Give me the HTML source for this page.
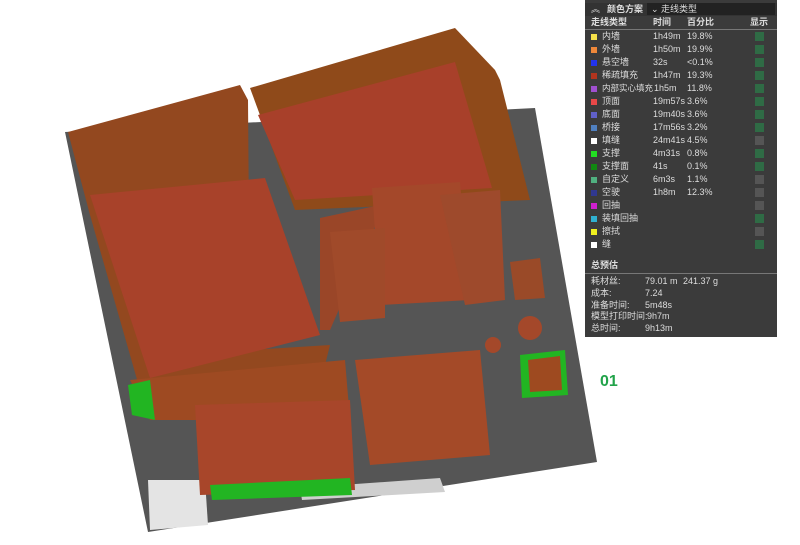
<!DOCTYPE html><html><head><meta charset="utf-8"><style>
body{margin:0;width:800px;height:545px;background:#fff;overflow:hidden;position:relative;font-family:"Liberation Sans","Noto Sans CJK SC",sans-serif}
#p{position:absolute;left:585px;top:0;width:192px;height:337px;background:#3b3b3b;color:#ddd;font-size:9px}
.r{position:absolute;left:0;width:192px;height:13px;line-height:13px}
.r span{position:absolute;white-space:nowrap}
.sw{width:6px;height:6px;top:4px;left:6px}
.ck{position:absolute;left:170px;top:2px;width:9px;height:9px;background:#2f6b45}
.ck.o{background:#555}
</style></head><body>
<svg width="800" height="545" style="position:absolute;left:0;top:0">
<polygon points="65,132 535,108 597,462 148,532" fill="#555"/>
<polygon points="148,480 205,480 208,525 150,530" fill="#e4e4e4"/>
<polygon points="300,488 440,478 445,492 302,500" fill="#cfcfcf"/>
<polygon points="68,132 240,85 248,100 250,350 330,345 325,365 140,390 90,215" fill="#93481f"/>
<polygon points="90,195 265,178 320,335 150,378" fill="#a8422a"/>
<polygon points="250,88 455,28 495,70 500,80 530,200 295,210" fill="#8f4a1a"/>
<polygon points="258,115 455,62 492,188 295,200" fill="#a8402a"/>
<polygon points="320,218 380,205 380,215 330,330 320,330" fill="#9a4628"/>
<polygon points="372,188 460,182 470,300 380,305" fill="#a4482a"/>
<polygon points="440,195 500,190 505,300 465,305" fill="#9e4a2c"/>
<polygon points="330,232 385,228 385,318 340,322" fill="#a04a2a"/>
<polygon points="510,262 540,258 545,298 515,300" fill="#9a4a28"/>
<polygon points="130,380 345,360 350,420 150,420" fill="#9e4a22"/>
<polygon points="195,405 350,400 355,490 200,495" fill="#a8462a"/>
<polygon points="355,360 480,350 490,455 370,465" fill="#a44a28"/>
<circle cx="530" cy="328" r="12" fill="#a4482a"/><circle cx="493" cy="345" r="8" fill="#a4482a"/>
<polygon points="520,355 565,350 568,395 522,398" fill="#22b522"/>
<polygon points="528,360 560,356 562,390 530,392" fill="#9e4a20"/>
<polygon points="128,385 150,380 155,420 132,415" fill="#22b522"/>
<polygon points="210,485 350,478 352,495 212,500" fill="#22b522"/>
<text x="600" y="386" fill="#22a34a" font-size="16" font-weight="bold" font-family="Liberation Sans">01</text>
</svg>
<div id="p">
<div class="r" style="top:3px;height:13px;background:#333"><span style="left:6px">︽</span><span style="left:22px;font-weight:bold">颜色方案</span><span style="left:62px;width:124px;background:#222;padding-left:4px;height:12px">⌄ 走线类型</span></div>
<div class="r" style="top:16px;font-weight:bold"><span style="left:6px">走线类型</span><span style="left:68px">时间</span><span style="left:102px">百分比</span><span style="left:165px">显示</span></div>
<div style="position:absolute;top:29px;left:0;width:192px;height:1px;background:#777"></div>
<div class="r" style="top:30px"><span class="sw" style="background:#f5e14a"></span><span style="left:17px">内墙</span><span style="left:68px">1h49m</span><span style="left:102px">19.8%</span><i class="ck"></i></div>
<div class="r" style="top:43px"><span class="sw" style="background:#f0883a"></span><span style="left:17px">外墙</span><span style="left:68px">1h50m</span><span style="left:102px">19.9%</span><i class="ck"></i></div>
<div class="r" style="top:56px"><span class="sw" style="background:#2233ee"></span><span style="left:17px">悬空墙</span><span style="left:68px">32s</span><span style="left:102px">&lt;0.1%</span><i class="ck"></i></div>
<div class="r" style="top:69px"><span class="sw" style="background:#b2341e"></span><span style="left:17px">稀疏填充</span><span style="left:68px">1h47m</span><span style="left:102px">19.3%</span><i class="ck"></i></div>
<div class="r" style="top:82px"><span class="sw" style="background:#a050d0"></span><span style="left:17px;font-size:8.5px">内部实心填充</span><span style="left:69px">1h5m</span><span style="left:102px">11.8%</span><i class="ck"></i></div>
<div class="r" style="top:95px"><span class="sw" style="background:#e84848"></span><span style="left:17px">顶面</span><span style="left:68px">19m57s</span><span style="left:102px">3.6%</span><i class="ck"></i></div>
<div class="r" style="top:108px"><span class="sw" style="background:#6060c8"></span><span style="left:17px">底面</span><span style="left:68px">19m40s</span><span style="left:102px">3.6%</span><i class="ck"></i></div>
<div class="r" style="top:121px"><span class="sw" style="background:#5080c0"></span><span style="left:17px">桥接</span><span style="left:68px">17m56s</span><span style="left:102px">3.2%</span><i class="ck"></i></div>
<div class="r" style="top:134px"><span class="sw" style="background:#fff"></span><span style="left:17px">填缝</span><span style="left:68px">24m41s</span><span style="left:102px">4.5%</span><i class="ck o"></i></div>
<div class="r" style="top:147px"><span class="sw" style="background:#22dd22"></span><span style="left:17px">支撑</span><span style="left:68px">4m31s</span><span style="left:102px">0.8%</span><i class="ck"></i></div>
<div class="r" style="top:160px"><span class="sw" style="background:#118811"></span><span style="left:17px">支撑面</span><span style="left:68px">41s</span><span style="left:102px">0.1%</span><i class="ck"></i></div>
<div class="r" style="top:173px"><span class="sw" style="background:#50b080"></span><span style="left:17px">自定义</span><span style="left:68px">6m3s</span><span style="left:102px">1.1%</span><i class="ck o"></i></div>
<div class="r" style="top:186px"><span class="sw" style="background:#303890"></span><span style="left:17px">空驶</span><span style="left:68px">1h8m</span><span style="left:102px">12.3%</span><i class="ck o"></i></div>
<div class="r" style="top:199px"><span class="sw" style="background:#d020d0"></span><span style="left:17px">回抽</span><i class="ck o"></i></div>
<div class="r" style="top:212px"><span class="sw" style="background:#30b0d0"></span><span style="left:17px">装填回抽</span><i class="ck"></i></div>
<div class="r" style="top:225px"><span class="sw" style="background:#f0f020"></span><span style="left:17px">擦拭</span><i class="ck o"></i></div>
<div class="r" style="top:238px"><span class="sw" style="background:#fff"></span><span style="left:17px">缝</span><i class="ck"></i></div>
<div class="r" style="top:259px;font-weight:bold"><span style="left:6px">总预估</span></div>
<div style="position:absolute;top:273px;left:0;width:192px;height:1px;background:#777"></div>
<div class="r" style="top:275px"><span style="left:6px">耗材丝:</span><span style="left:60px">79.01 m</span><span style="left:98px">241.37 g</span></div>
<div class="r" style="top:287px"><span style="left:6px">成本:</span><span style="left:60px">7.24</span></div>
<div class="r" style="top:299px"><span style="left:6px">准备时间:</span><span style="left:60px">5m48s</span></div>
<div class="r" style="top:310px"><span style="left:6px">模型打印时间:</span><span style="left:62px">9h7m</span></div>
<div class="r" style="top:322px"><span style="left:6px">总时间:</span><span style="left:60px">9h13m</span></div>
</div>
</body></html>
